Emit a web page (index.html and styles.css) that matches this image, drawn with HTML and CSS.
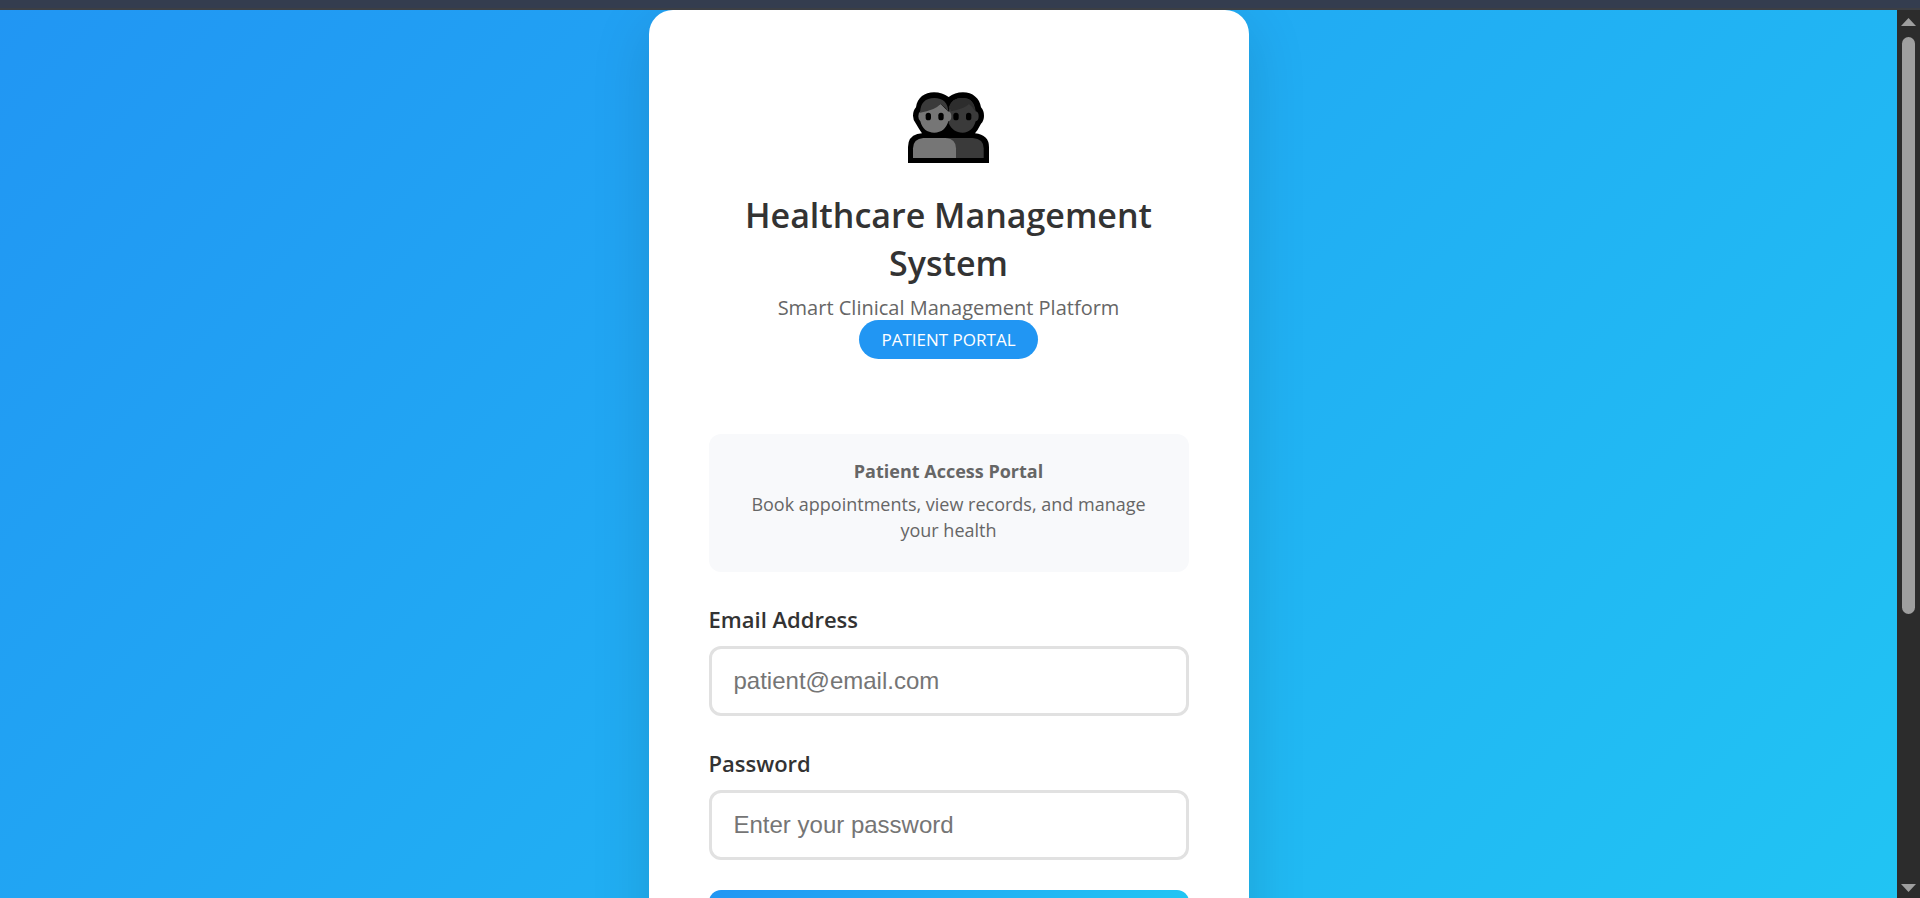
FILE: index.html
```html
<!DOCTYPE html>
<html lang="en">
<head>
<meta charset="utf-8">
<title>Healthcare Management System</title>
<link rel="stylesheet" href="styles.css">
</head>
<body>
<div class="topbar"></div>
<div class="window">
  <div class="viewport">
    <div class="page">
      <main class="card">
        <header class="header">
          <svg class="logo" viewBox="54 36 243 213" aria-hidden="true">
            <path d="M54 249V201Q54 170 82 162L96 160Q91 153 86 145L78 131Q69 121 69 107Q69 92 78 82C82 53 104 37 132 37Q157 37 176 51Q194 37 219 37C248 37 269 55 273 82Q282 92 282 107Q282 122 273 131L262 151L255 160Q297 165 297 201V249Z" fill="#000"/>
            <path d="M176 110L178 82Q184 54 218 54Q252 54 257 94Q266 95 266 109Q266 122 257 124C251 145 238 158 218 158C198 158 184 148 176 130Z" fill="#3a3a3a"/>
            <path d="M176 82Q185 54 218 54Q250 54 256 94Q249 82 237 72Q226 85 183 94Q182 86 176 82Z" fill="#2d2d2d"/>
            <path d="M91 94L152 72L174 94Q184 96 184 109Q184 122 175 124C169 146 154 158 133 158C111 158 96 146 91 124Q85 120 85 109Q85 98 91 94Z" fill="#767676"/>
            <path d="M90 98Q92 54 133 54Q173 54 175 96Q167 82 152 72Q133 92 90 98Z" fill="#3a3a3a"/>
            <rect x="107" y="98" width="16" height="23" rx="8"/>
            <rect x="145" y="98" width="16" height="23" rx="8"/>
            <rect x="190" y="98" width="16" height="23" rx="8"/>
            <rect x="228" y="98" width="16" height="23" rx="8"/>
            <path d="M170 174H248Q281 176 281 205V234H190Z" fill="#3a3a3a"/>
            <path d="M69 234V205Q70 176 100 174H168Q198 177 198 205V234Z" fill="#767676"/>
          </svg>
          <h1 class="title">Healthcare Management System</h1>
          <p class="subtitle">Smart Clinical Management Platform</p>
          <span class="badge">PATIENT PORTAL</span>
        </header>
        <section class="info">
          <strong class="info-title">Patient Access Portal</strong>
          <p class="info-text">Book appointments, view records, and manage your health</p>
        </section>
        <form class="form">
          <div class="field">
            <label class="label" for="email">Email Address</label>
            <input class="input" id="email" type="email" placeholder="patient@email.com">
          </div>
          <div class="field">
            <label class="label" for="password">Password</label>
            <input class="input" id="password" type="password" placeholder="Enter your password">
          </div>
          <button class="submit" type="submit" aria-label="Sign in"></button>
        </form>
      </main>
    </div>
  </div>
  <div class="scrollbar" aria-hidden="true">
    <svg class="arrow" viewBox="0 0 15 8"><path d="M0 8L7.500 0L15 8Z"/></svg>
    <div class="track"><div class="thumb"></div></div>
    <svg class="arrow" viewBox="0 0 15 8"><path d="M0 0L7.500 8L15 0Z"/></svg>
  </div>
</div>
</body>
</html>
```
FILE: styles.css
```css
* {
  box-sizing: border-box;
  margin: 0;
}

body {
  display: flex;
  flex-direction: column;
  height: 100vh;
  overflow: hidden;
  font-family: "Open Sans", "Noto Sans", sans-serif;
  color: #333;
}

.topbar {
  flex: none;
  height: 10px;
  background: #343d4f;
  border-bottom: 2px solid #3c3f44;
}

.window {
  display: flex;
  flex: 1;
  min-height: 0;
}

.viewport {
  flex: 1;
  overflow: hidden;
}

.page {
  display: flex;
  justify-content: center;
  min-height: 148%;
  background: linear-gradient(135deg, #2196f3 0%, #21cbf3 100%);
}

.card {
  width: 100%;
  max-width: 600px;
  padding: 60px;
  background: #fff;
  border-radius: 24px;
  box-shadow: 0 15px 60px rgba(0, 0, 0, 0.13);
}

.header {
  display: flex;
  flex-direction: column;
  align-items: center;
  margin-bottom: 75px;
  padding-top: 22px;
  text-align: center;
}

.logo {
  width: 81px;
  height: 71px;
  margin-bottom: 28px;
}

.title {
  font-size: 34px;
  font-weight: 600;
  line-height: 48px;
}

.subtitle {
  margin-top: 7px;
  font-size: 20px;
  line-height: 28px;
  color: #666;
}

.badge {
  margin-top: -2px;
  padding: 0 22px;
  border-radius: 20px;
  background: #2196f3;
  color: #fff;
  font-size: 17px;
  line-height: 39px;
}

.info {
  margin-bottom: 30px;
  padding: 24px 30px 29px;
  border-radius: 12px;
  background: #f8f9fb;
  color: #666;
  font-size: 18px;
  line-height: 26px;
  text-align: center;
}

.info-title {
  display: block;
  margin-bottom: 7px;
}

.field {
  display: flex;
  flex-direction: column;
  gap: 9px;
  margin-bottom: 30px;
}

.label {
  font-size: 22px;
  font-weight: 600;
  line-height: 35px;
}

.input {
  width: 100%;
  height: 70px;
  padding: 0 22px;
  border: 3px solid #e1e1e1;
  border-radius: 12px;
  background: #fff;
  color: #333;
  font-family: "Liberation Sans", Arial, sans-serif;
  font-size: 24px;
}

.input::placeholder {
  color: #757575;
}

.submit {
  width: 100%;
  height: 66px;
  border: 0;
  border-radius: 12px;
  background: linear-gradient(135deg, #2196f3 0%, #21cbf3 100%);
}

.scrollbar {
  display: flex;
  flex: none;
  flex-direction: column;
  align-items: center;
  gap: 11px;
  width: 23px;
  padding: 8px 0 6px;
  background: #2c2c2c;
}

.arrow {
  flex: none;
  width: 15px;
  height: 8px;
  fill: #9f9f9f;
}

.track {
  flex: 1;
  width: 13px;
}

.thumb {
  height: 69%;
  border-radius: 7px;
  background: #9f9f9f;
}
```
